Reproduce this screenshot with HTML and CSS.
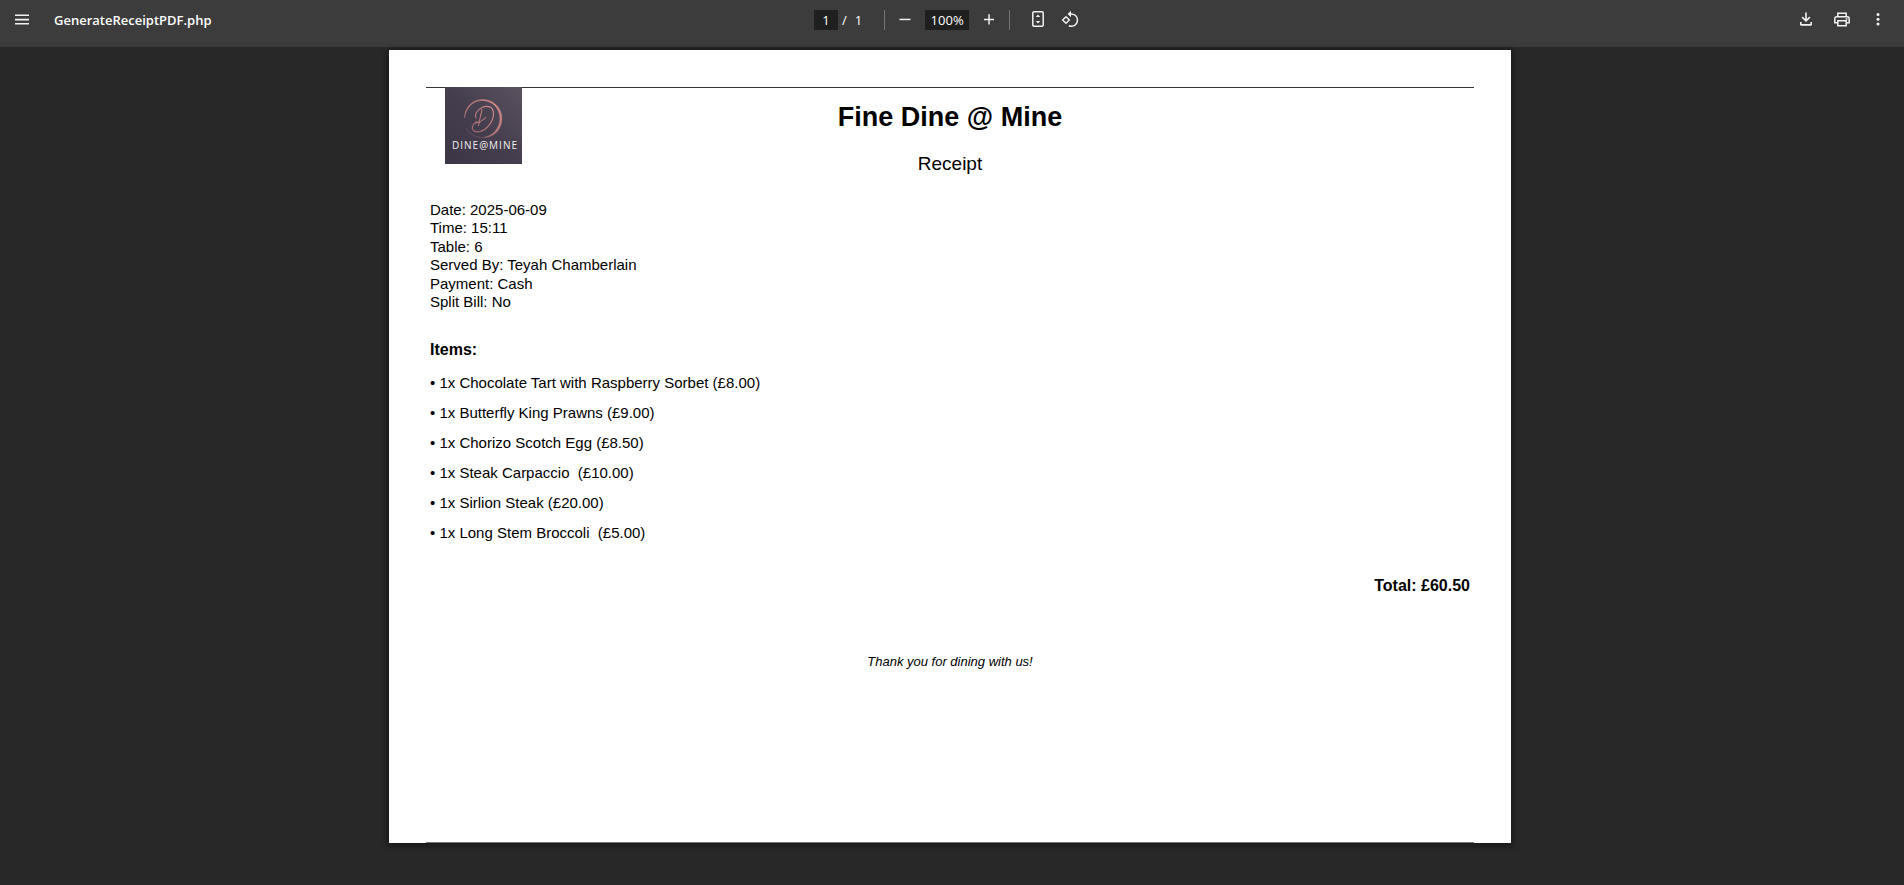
FILE: index.html
```html
<!DOCTYPE html>
<html lang="en">
<head>
  <meta charset="UTF-8" />
  <title>GenerateReceiptPDF.php</title>
  <meta name="viewport" content="width=device-width, initial-scale=1.0" />
  <link rel="stylesheet" href="styles.css">
</head>
<body>
  <!-- Viewer toolbar -->
  <header class="toolbar">
    <div class="toolbar-start">
      <button class="icon-btn" type="button" aria-label="Menu">
        <svg width="20" height="20" viewBox="0 0 20 20"><path d="M3 4.500h14v1.600H3zM3 8.800h14v1.600H3zM3 13h14v1.600H3z"/></svg>
      </button>
      <span class="file-name">GenerateReceiptPDF.php</span>
    </div>

    <div class="toolbar-center">
      <input class="field page-field" type="text" value="1" aria-label="Page number" />
      <span class="slash">/</span>
      <span class="page-count">1</span>
      <span class="divider"></span>
      <button class="icon-btn zoom-out" type="button" aria-label="Zoom out">
        <svg width="20" height="20" viewBox="0 0 20 20"><path d="M4.500 8.700h11v1.500h-11z"/></svg>
      </button>
      <input class="field zoom-field" type="text" value="100%" aria-label="Zoom level" />
      <button class="icon-btn zoom-in" type="button" aria-label="Zoom in">
        <svg width="20" height="20" viewBox="0 0 20 20"><path d="M5 8.700h4.300V4.300h1.500v4.400H15v1.500h-4.200v4.400H9.300v-4.400H5z"/></svg>
      </button>
      <span class="divider"></span>
      <button class="icon-btn fit" type="button" aria-label="Fit to page">
        <svg width="20" height="20" viewBox="0 0 20 20"><rect x="4.800" y="1.800" width="10.400" height="14.400" rx="1.200" fill="none" stroke="#f1f1f1" stroke-width="1.500"/><path d="M10 4.500l2.200 2.400H7.800zM10 13.500l2.200-2.400H7.800z"/></svg>
      </button>
      <button class="icon-btn rotate" type="button" aria-label="Rotate">
        <svg width="20" height="20" viewBox="0 0 20 20"><g fill="none" stroke="#f1f1f1" stroke-width="1.500"><path d="M6 6.700l3.300 3.300L6 13.300 2.700 10z"/><path d="M9.500 4C14 3.300 17.500 6 17.500 10c0 3.500-2.800 6.200-6.200 6.200-1 0-1.700-.2-2.500-.5"/></g><path d="M11 .8v6.400L7.600 4z"/></svg>
      </button>
    </div>

    <div class="toolbar-end">
      <button class="icon-btn" type="button" aria-label="Download">
        <svg width="20" height="20" viewBox="0 0 20 20"><path d="M9.200 2.500h1.600v6.600l2.500-2.500 1.100 1.100L10 12.100 5.600 7.700l1.100-1.100 2.500 2.500zM4 12h1.600v2.100h8.800V12H16v2.500c0 .7-.5 1.200-1.200 1.200H5.200c-.7 0-1.200-.5-1.200-1.200z"/></svg>
      </button>
      <button class="icon-btn" type="button" aria-label="Print">
        <svg width="20" height="20" viewBox="0 0 20 20" fill="none" stroke="#f1f1f1" stroke-width="1.500"><path d="M5.800 6.500V3.300h8.400v3.200M5.500 12.700H2.800V8.500c0-1.100.8-1.800 1.800-1.800h10.800c1 0 1.800.7 1.800 1.800v4.200h-2.700"/><path d="M5.800 10.800h8.400v4.900H5.800z"/><circle cx="14.600" cy="9" r=".3"/></svg>
      </button>
      <button class="icon-btn" type="button" aria-label="More actions">
        <svg width="20" height="20" viewBox="0 0 20 20"><circle cx="10" cy="4.500" r="1.500"/><circle cx="10" cy="9.300" r="1.500"/><circle cx="10" cy="14" r="1.500"/></svg>
      </button>
    </div>
  </header>

  <!-- Document -->
  <main class="viewer">
    <article class="sheet">
      <div class="receipt">
        <div class="receipt-head">
          <svg class="logo" width="77" height="77" viewBox="0 0 77 77" role="img" aria-label="Dine@Mine">
            <defs>
              <linearGradient id="plum" x1="0" y1="1" x2="1" y2="0">
                <stop offset="0" stop-color="#3b3545"/>
                <stop offset=".5" stop-color="#453e4e"/>
                <stop offset="1" stop-color="#5b525f"/>
              </linearGradient>
              <linearGradient id="rose" x1="0" y1="1" x2="1" y2="0">
                <stop offset="0" stop-color="#99676c"/>
                <stop offset="1" stop-color="#d98f8d"/>
              </linearGradient>
            </defs>
            <rect width="77" height="77" fill="url(#plum)"/>
            <path d="M19.500 31C19.500 21 27 12.500 37.500 12.500 48.500 12.500 56.800 21 56.800 31.500 56.800 42.500 49 50.300 39 50.500 48 48.800 55 41 55 31.500 55 21 47 13.700 37.500 13.400 28 13.200 20.800 21 19.500 31z" fill="url(#rose)" stroke="url(#rose)" stroke-width=".5"/>
            <path d="M21 41c3.500 6 9.500 9.700 18 9.500" fill="none" stroke="#75545f" stroke-width=".7"/>
            <path d="M37 22.500c-1 5-2.500 10-3.500 16M30.500 35c3.500.5 7-1 10-4.500M31 31c-2-3 1-8 6-10.500 6-2.700 11.500-.5 11.500 6 0 8-7 17-14 18.200-5 .8-8-1.700-7-5.200 1-3.200 4-4.500 7.500-4" fill="none" stroke="url(#rose)" stroke-width="1.100" stroke-linecap="round"/>
            <text class="logo-text" x="40" y="62" text-anchor="middle">DINE@MINE</text>
          </svg>
          <div class="headings">
            <h1>Fine Dine @ Mine</h1>
            <p>Receipt</p>
          </div>
        </div>

        <div class="details">
          <div>Date: 2025-06-09</div>
          <div>Time: 15:11</div>
          <div>Table: 6</div>
          <div>Served By: Teyah Chamberlain</div>
          <div>Payment: Cash</div>
          <div>Split Bill: No</div>
        </div>

        <h2>Items:</h2>
        <ul class="items">
          <li>• 1x Chocolate Tart with Raspberry Sorbet (£8.00)</li>
          <li>• 1x Butterfly King Prawns (£9.00)</li>
          <li>• 1x Chorizo Scotch Egg (£8.50)</li>
          <li>• 1x Steak Carpaccio  (£10.00)</li>
          <li>• 1x Sirlion Steak (£20.00)</li>
          <li>• 1x Long Stem Broccoli  (£5.00)</li>
        </ul>

        <p class="total">Total: £60.50</p>
        <p class="thanks">Thank you for dining with us!</p>
      </div>
    </article>
  </main>
</body>
</html>
```
FILE: styles.css
```css
* { box-sizing: border-box; }
body {
  margin: 0;
  min-height: 100vh;
  background: #282828;
  font-family: "Liberation Sans", Arial, sans-serif;
}
h1, h2, p, ul { margin: 0; padding: 0; }

/* toolbar */
.toolbar {
  display: grid;
  grid-template-columns: 1fr auto 1fr;
  height: 47px;
  padding: 0 16px 8px 12px;
  background: #3c3c3c;
  color: #fff;
  font-family: "Open Sans", "Segoe UI", sans-serif;
  font-size: 13px;
}
.toolbar-start,
.toolbar-center,
.toolbar-end {
  display: flex;
  align-items: center;
}
.toolbar-end {
  justify-content: flex-end;
  gap: 16px;
}
.icon-btn {
  display: flex;
  padding: 0;
  border: none;
  background: none;
  cursor: pointer;
}
.icon-btn svg { fill: #f1f1f1; }
.icon-btn svg[fill="none"] { fill: none; }
.file-name {
  margin-left: 22px;
  font-weight: 600;
}
.field {
  height: 20px;
  padding: 0;
  border: none;
  background: #1f1f1f;
  color: #fff;
  font: inherit;
  text-align: center;
}
.page-field { width: 24px; }
.zoom-field { width: 44px; }
.slash { margin-left: 4px; }
.page-count { margin-left: 8px; }
.divider {
  width: 1px;
  height: 20px;
  background: #757575;
}
.page-count + .divider { margin-left: 22px; }
.zoom-out { margin: 0 10px; }
.zoom-in { margin: 0 10px; }
.fit { margin: 0 12px 0 18px; }
.rotate { margin-right: 6px; }

/* document */
.viewer { padding: 3px 12px 40px 8px; }
.sheet {
  max-width: 1122px;
  min-height: 793px;
  margin: 0 auto;
  padding: 37px 37px 0;
  display: flex;
  background: #fff;
  color: #000;
  box-shadow: 0 1px 6px 2px rgba(0,0,0,0.4);
}
.receipt {
  flex: 1;
  border-top: 1px solid #333;
  border-bottom: 1px solid #777;
}
.receipt-head {
  display: grid;
  grid-template-columns: 77px 1fr 77px;
  padding: 0 19px;
  margin-top: -1px;
}
.headings {
  padding-top: 14px;
  text-align: center;
}
.headings h1 {
  font-size: 27px;
  line-height: 32px;
}
.headings p {
  margin-top: 20px;
  font-size: 19px;
  line-height: 22px;
}
.logo-text {
  fill: #f1eef2;
  font: 10px "Open Sans", sans-serif;
  letter-spacing: 1px;
}
.details {
  display: flex;
  flex-direction: column;
  justify-content: space-between;
  min-height: 110px;
  margin: 26px 4px 0;
  font-size: 15px;
  line-height: 18px;
}
h2, .total {
  font-size: 16px;
  font-weight: bold;
  line-height: 20px;
}
h2 { margin: 29px 4px 0; }
.items {
  margin: 8px 4px 0;
  list-style: none;
  font-size: 15px;
  line-height: 30px;
}
.items li { white-space: pre-wrap; }
.total {
  margin: 28px 4px 0;
  text-align: right;
}
.thanks {
  margin-top: 56px;
  font-size: 13px;
  font-style: italic;
  line-height: 20px;
  text-align: center;
}
```
